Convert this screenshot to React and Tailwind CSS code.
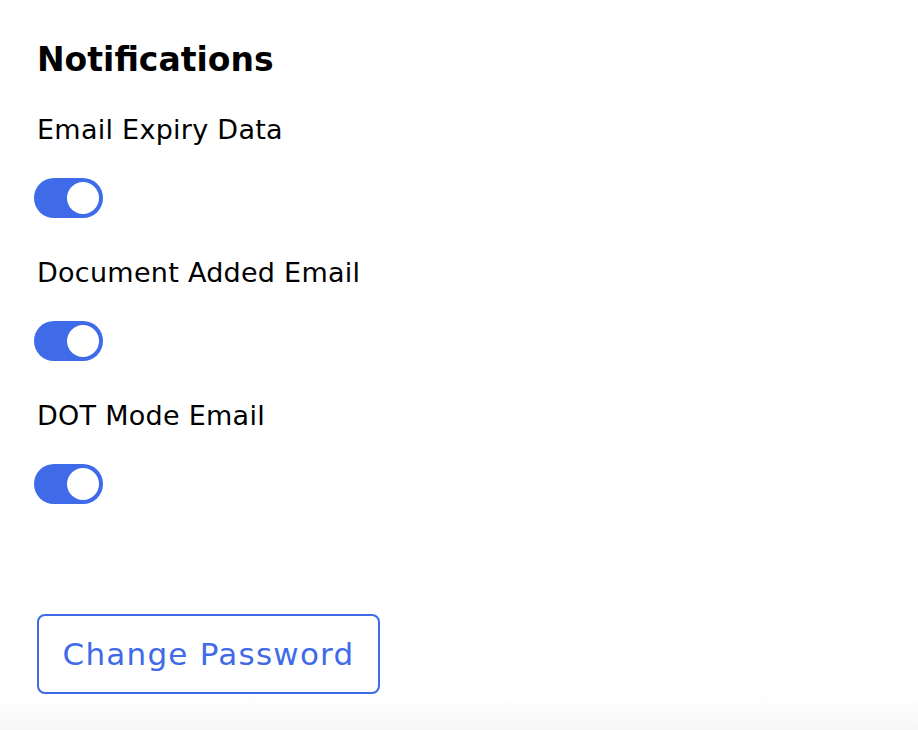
const Toggle = () => (
  <button
    type="button"
    role="switch"
    aria-checked="true"
    className="relative flex h-[40px] w-[69px] items-center rounded-full bg-[#3f6ae8]"
  >
    <span className="absolute right-[4px] top-[4px] h-[32px] w-[32px] rounded-full bg-white" />
  </button>
);

const rows = ["Email Expiry Data", "Document Added Email", "DOT Mode Email"];

export default function App() {
  return (
    <div className="relative h-[730px] w-full overflow-hidden bg-white font-['DejaVu_Sans',sans-serif] text-black">
      <div className="flex flex-col pl-[37px] pt-[40px]">
        <h2 className="h-[40px] text-[33px] font-bold leading-[40px]">Notifications</h2>
        <div className="mt-[32px] flex flex-col">
          {rows.map((label, i) => (
            <div key={label} className={`flex flex-col items-start ${i > 0 ? "mt-[37px]" : ""}`}>
              <span className="h-[36px] text-[27px] leading-[36px] tracking-[0.01em]">{label}</span>
              <div className="-ml-[3px] mt-[30px]">
                <Toggle />
              </div>
            </div>
          ))}
        </div>
        <button
          type="button"
          className="mt-[110px] flex h-[80px] w-[343px] items-center justify-center rounded-[8px] border-2 border-[#3f6ae8] text-[31px] tracking-[0.04em] text-[#3f6ae8]"
        >
          Change Password
        </button>
      </div>
      <div className="absolute bottom-0 left-0 h-[34px] w-full bg-gradient-to-b from-white to-[#f6f6f6]" />
    </div>
  );
}
